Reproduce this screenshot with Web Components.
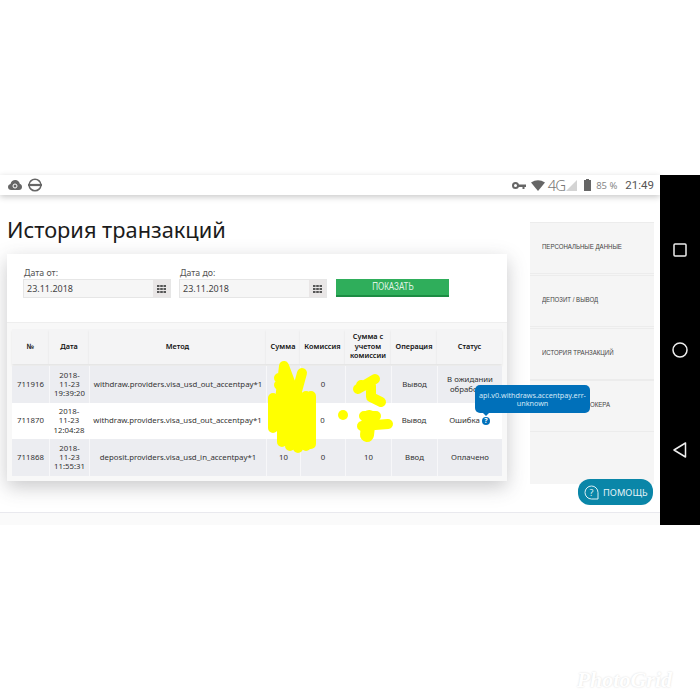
<!doctype html>
<html lang="ru">
<head>
<meta charset="utf-8">
<style>
  html, body { margin: 0; background: #fff; }
  body { font-family: "Noto Sans", "Open Sans", sans-serif; color: #333; height: 700px; overflow: hidden; }
</style>
</head>
<body>
<app-screen>
  <status-bar slot="top"></status-bar>
  <h1-title slot="title">История транзакций</h1-title>
  <filter-card slot="card"></filter-card>
  <tx-table slot="card"></tx-table>
  <side-menu slot="side"></side-menu>
  <help-button slot="over"></help-button>
  <nav-bar slot="nav"></nav-bar>
</app-screen>

<script>
class AppScreen extends HTMLElement {
  constructor() {
    super()
    this.attachShadow({ mode: 'open' })
    this.shadowRoot.innerHTML = `
      <style>
        :host { display: block; padding-top: 175px; }
        .frame { display: flex; height: 350px; }
        .left { position: relative; width: 660px; display: flex; flex-direction: column; background: #fff; }
        .main { display: flex; flex: 1; padding: 27px 6px 0 7px; align-items: flex-start; }
        .col { width: 500px; }
        .card { background: #fff; box-shadow: 0 6px 18px rgba(60,60,70,.28); }
        .foot { height: 12px; background: #fafafa; border-top: 1px solid #e9e9ee; margin-top: auto; }
        .mark { display: flex; justify-content: flex-end; padding: 142px 28px 0 0; font: italic 700 22px "Liberation Serif", serif; color: #fff; text-shadow: 0 0 2px #d8d8d8; }
      </style>
      <div class="frame">
        <div class="left">
          <slot name="top"></slot>
          <div class="main">
            <div class="col">
              <slot name="title"></slot>
              <div class="card"><slot name="card"></slot></div>
            </div>
            <slot name="side"></slot>
          </div>
          <div class="foot"></div>
          <slot name="over"></slot>
        </div>
        <slot name="nav"></slot>
      </div>
      <div class="mark">PhotoGrid</div>
    `
  }
}

class StatusBar extends HTMLElement {
  constructor() {
    super()
    this.attachShadow({ mode: 'open' })
    this.shadowRoot.innerHTML = `
      <style>
        :host { display: flex; align-items: center; height: 20px; padding: 0 6px 0 8px; background: #fff; box-shadow: 0 2px 6px rgba(0,0,0,.22); position: relative; color: #666; }
        .l { display: flex; gap: 6px; align-items: center; }
        .r { display: flex; align-items: center; margin-left: auto; }
        .g { font: 300 15px/20px "Noto Sans", sans-serif; letter-spacing: -1px; color: #777; margin: 0 1px 0 3px; }
        .p { font: 9.500px "Noto Sans", sans-serif; color: #888; margin: 0 8px 0 5px; }
        .t { font: 400 11.500px "Roboto", sans-serif; color: #555; }
        svg { display: block; }
      </style>
      <div class="l">
        <svg width="14" height="12" viewBox="0 0 14 12"><path d="M3.200 11C1.400 11 0 9.700 0 8c0-1.500 1-2.700 2.500-3C3 2.600 5 1 7.200 1c2.500 0 4.400 1.800 4.700 4.100C13.200 5.400 14 6.500 14 8c0 1.700-1.300 3-3 3z" fill="#666"/><circle cx="7" cy="7" r="2" fill="none" stroke="#fff" stroke-width="1"/></svg>
        <svg width="14" height="14" viewBox="0 0 14 14"><circle cx="7" cy="7" r="5.800" fill="none" stroke="#666" stroke-width="1.600"/><rect x="0" y="5.800" width="14" height="2.400" fill="#666"/><path d="M2 5.200h10M2 8.800h10" stroke="#fff" stroke-width=".7"/></svg>
      </div>
      <div class="r">
        <svg width="14" height="7" viewBox="0 0 14 7"><circle cx="3.500" cy="3.500" r="2.500" fill="none" stroke="#666" stroke-width="2"/><path d="M6 2.500h8v2.500h-1.500v2h-2V5H6z" fill="#666"/></svg>
        <svg style="margin-left:5px" width="14" height="11" viewBox="0 0 14 11"><path d="M0 2.500Q7-2.200 14 2.500L7 11z" fill="#666"/></svg>
        <span class="g">4G</span>
        <svg width="11" height="11" viewBox="0 0 11 11"><path d="M11 0v11H0z" fill="#d4d4d4"/></svg>
        <svg style="margin-left:7px" width="7" height="12" viewBox="0 0 7 12"><path d="M2 0h3v1h2v11H0V1h2z" fill="#666"/></svg>
        <span class="p">85 %</span>
        <span class="t">21:49</span>
      </div>
    `
  }
}

class H1Title extends HTMLElement {
  constructor() {
    super()
    this.attachShadow({ mode: 'open' })
    this.shadowRoot.innerHTML = `
      <style>
        :host { display: block; height: 32px; font: 400 21.800px/15px "Noto Sans", sans-serif; color: #1b1b1b; }
      </style>
      <slot></slot>
    `
  }
}

const fieldTemplate = document.createElement('template')
fieldTemplate.innerHTML = `
  <style>
    :host { display: block; width: 146px; }
    .lab { font: 8.800px/11px "Noto Sans", sans-serif; color: #555; margin-bottom: 1px; }
    .box { display: flex; height: 17px; background: #f6f6f6; box-shadow: 0 0 0 1px #e6e6e6; }
    .val { flex: 1; font: 9px/17px "Noto Sans", sans-serif; padding-left: 3px; color: #444; }
    .btn { width: 17px; background: #e9e6e6; display: flex; align-items: center; justify-content: center; }
  </style>
  <div class="lab"></div>
  <div class="box">
    <div class="val"></div>
    <div class="btn">
      <svg width="9" height="8" viewBox="0 0 9 8" fill="#555"><path d="M0 0h2.500v2H0zM3.200 0h2.600v2H3.200zM6.500 0H9v2H6.500zM0 3h2.500v2H0zM3.200 3h2.600v2H3.200zM6.500 3H9v2H6.500zM0 6h2.500v2H0zM3.200 6h2.600v2H3.200zM6.500 6H9v2H6.500z"/></svg>
    </div>
  </div>
`
class DateField extends HTMLElement {
  constructor() {
    super()
    this.attachShadow({ mode: 'open' }).appendChild(fieldTemplate.content.cloneNode(true))
  }
  connectedCallback() {
    this.shadowRoot.querySelector('.lab').textContent = this.getAttribute('label')
    this.shadowRoot.querySelector('.val').textContent = this.getAttribute('value')
  }
}

class FilterCard extends HTMLElement {
  constructor() {
    super()
    this.attachShadow({ mode: 'open' })
    this.shadowRoot.innerHTML = `
      <style>
        :host { display: flex; align-items: flex-end; gap: 10px; height: 68px; box-sizing: border-box; padding: 13px 0 25px 17px; background: #fff; }
        .show { width: 113px; height: 18px; box-sizing: border-box; background: #2fae5b; border-bottom: 2px solid #1c8c43; color: #dff3e4; text-align: center; font: 10px/16px "Liberation Sans", sans-serif; }
        span { display: inline-block; transform: scaleX(.8); }
      </style>
      <date-field label="Дата от:" value="23.11.2018"></date-field>
      <date-field label="Дата до:" value="23.11.2018"></date-field>
      <div class="show"><span>ПОКАЗАТЬ</span></div>
    `
  }
}

const rows = [
  ['711916', '2018-<br>11-23<br>19:39:20', 'withdraw.providers.visa_usd_out_accentpay*1', '', '0', '', 'Вывод', 'В ожидании<br>обработки'],
  ['711870', '2018-<br>11-23<br>12:04:28', 'withdraw.providers.visa_usd_out_accentpay*1', '', '0', '', 'Вывод', 'Ошибка <i></i>'],
  ['711868', '2018-<br>11-23<br>11:55:31', 'deposit.providers.visa_usd_in_accentpay*1', '10', '0', '10', 'Ввод', 'Оплачено']
]
const heads = ['№', 'Дата', 'Метод', 'Сумма', 'Комиссия', 'Сумма с<br>учетом<br>комиссии', 'Операция', 'Статус']

class TxTable extends HTMLElement {
  constructor() {
    super()
    this.attachShadow({ mode: 'open' })
    this.render()
  }

  render() {
    this.shadowRoot.innerHTML = `
      <style>
        :host { display: block; position: relative; padding: 6px 5px 5px; background: #f8f8f8; border-top: 1px solid #eee; height: 147px; }
        .grid { display: grid; grid-template-columns: 37px 40px 177px 34px 45px 46px 46px 65px; grid-template-rows: 37px 37px 36px 37px; position: relative; }
        .c { display: flex; align-items: center; justify-content: center; text-align: center; font: 7.800px/9.200px "Noto Sans", sans-serif; color: #333; }
        .h { font-weight: 600; font-size: 7.300px; line-height: 9.500px; color: #111; background: #f4f4f5; box-shadow: 0 2px 2px rgba(0,0,0,.08); height: 35px; }
        .a { background: #ecedf1; }
        .a + .a { border-left: 1px solid #f7f7f9; }
        .b { background: #fff; }
        i { display: inline-block; width: 8px; height: 8px; border-radius: 50%; background: #0070ba; color: #fff; font: 700 7px/8px "Noto Sans", sans-serif; margin-left: 2px; vertical-align: -1px; }
        i::before { content: "?"; }
        .tip { position: absolute; left: 463px; top: 56px; width: 115px; height: 28px; box-sizing: border-box; padding: 6px 2px; background: #0070ba; border-radius: 5px; color: #d5e8f6; text-align: center; font: 7.200px/8px "Noto Sans", sans-serif; z-index: 5; }
        .tip::after { content: ""; position: absolute; left: 6px; bottom: -3px; border: 3px solid transparent; border-top-color: #0070ba; border-bottom: 0; margin-left: 2px; }
        svg { position: absolute; left: 0; top: 0; z-index: 4; overflow: visible; pointer-events: none; }
      </style>
      <div class="grid">
        ${heads.map((h) => `<div class="c h">${h}</div>`).join('')}
        ${rows.map((row, i) => row.map((cell) => `<div class="c ${i === 1 ? 'b' : 'a'}">${cell}</div>`).join('')).join('')}
        <div class="tip">api.v0.withdraws.accentpay.err-unknown</div>
        <svg width="490" height="147" viewBox="12 329 490 147" fill="none" stroke="#ffff00" stroke-linecap="round" stroke-linejoin="round">
          <g stroke-width="10">
            <path d="M284 366L280 400M284 366L293 390M302 373L296 395M279 385L293 395M279 378L288 378"/>
            <path d="M273 398L273 428M282 396L282 442M290 395L290 446M298 395L298 448M306 396L306 446M311 396L311 444"/>
          </g>
          <circle cx="343" cy="415" r="5" fill="#ffff00" stroke="none"/>
          <g stroke-width="10">
            <path d="M358 389L375 379M361 385L371 386L371 397L381 402"/>
            <path d="M362 426L388 424M364 416L376 416"/>
          </g>
          <path d="M369 417L367 435" stroke-width="14"/>
        </svg>
      </div>
    `
  }
}

class SideMenu extends HTMLElement {
  constructor() {
    super()
    this.attachShadow({ mode: 'open' })
    const items = ['ПЕРСОНАЛЬНЫЕ ДАННЫЕ', 'ДЕПОЗИТ / ВЫВОД', 'ИСТОРИЯ ТРАНЗАКЦИЙ']
    this.shadowRoot.innerHTML = `
      <style>
        :host { display: block; width: 124px; height: 262px; margin-left: 23px; background: #f5f5f5; }
        .i { height: 47px; padding: 0 0 3px 12px; border: 1px solid #ececec; border-width: 1px 0; margin-bottom: .75px; display: flex; align-items: center; font: 8px "Liberation Sans", sans-serif; color: #444; }
        .cut { padding-left: 60px; }
        span { transform: scaleX(.76); transform-origin: left; white-space: nowrap; }
      </style>
      ${items.map((t) => `<div class="i"><span>${t}</span></div>`).join('')}
      <div class="i cut"><span>ОКЕРА</span></div>
    `
  }
}

class HelpButton extends HTMLElement {
  constructor() {
    super()
    this.attachShadow({ mode: 'open' })
    this.shadowRoot.innerHTML = `
      <style>
        :host { position: absolute; left: 578px; top: 304px; width: 75px; height: 26px; box-sizing: border-box; padding-left: 6px; gap: 4px; border-radius: 12px; background: #0a86a8; color: #e4f3f7; display: flex; align-items: center; font: 9.300px "Noto Sans", sans-serif; }
      </style>
      <svg width="15" height="15" viewBox="0 0 15 15" fill="none" stroke="#dff1f5"><path d="M7.500 1a6.500 6.500 0 1 0 0 13H14V7.500A6.500 6.500 0 0 0 7.500 1z"/><text x="7.500" y="11" text-anchor="middle" font-family="Noto Sans" font-size="9" fill="#dff1f5" stroke="none">?</text></svg>
      ПОМОЩЬ
    `
  }
}

class NavBar extends HTMLElement {
  constructor() {
    super()
    this.attachShadow({ mode: 'open' })
    this.shadowRoot.innerHTML = `
      <style>
        :host { display: grid; grid-template-rows: repeat(3, 100px); align-content: center; justify-items: center; align-items: center; width: 40px; background: #000; }
        svg { display: block; }
      </style>
      <svg width="14" height="14" viewBox="0 0 14 14" fill="none" stroke="#eee" stroke-width="1.500"><rect x="1" y="1" width="12" height="12" rx="1"/></svg>
      <svg width="16" height="16" viewBox="0 0 16 16" fill="none" stroke="#eee" stroke-width="1.500"><circle cx="8" cy="8" r="7"/></svg>
      <svg width="14" height="16" viewBox="0 0 14 16" fill="none" stroke="#eee" stroke-width="1.500" stroke-linejoin="round"><path d="M12.500 1v14L1 8z"/></svg>
    `
  }
}

customElements.define('app-screen', AppScreen)
customElements.define('status-bar', StatusBar)
customElements.define('h1-title', H1Title)
customElements.define('date-field', DateField)
customElements.define('filter-card', FilterCard)
customElements.define('tx-table', TxTable)
customElements.define('side-menu', SideMenu)
customElements.define('help-button', HelpButton)
customElements.define('nav-bar', NavBar)
</script>
</body>
</html>
